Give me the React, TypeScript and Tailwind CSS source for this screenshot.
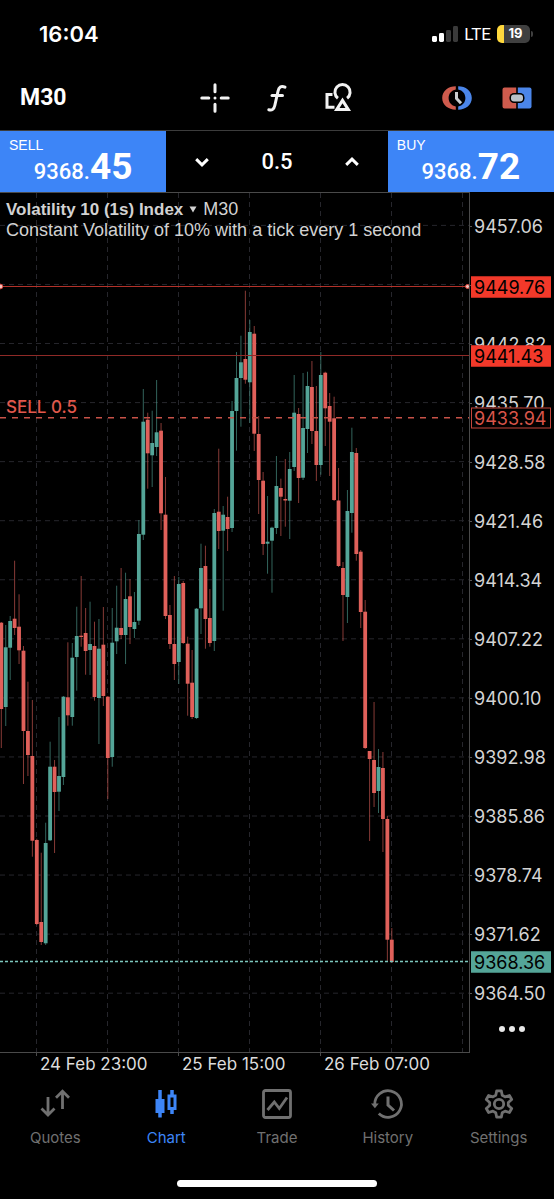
import { useState } from 'react';
import type { ReactNode } from 'react';

// [open side up?, body top, body bottom, wick top, wick bottom]
type Candle = ['g' | 'r', number, number, number, number];

const CHART_TOP = 193;
const CHART_W = 469;
const CHART_H = 859;
const STEP_X = 4.4375;
const FIRST_X = 1.3;

const CANDLES: Candle[] = [
  ['r', 622.7, 709, 622, 748],
  ['g', 647.3, 707, 625, 726],
  ['g', 621, 647.7, 616, 680],
  ['r', 618.7, 628, 560.7, 635],
  ['r', 626.7, 650.3, 594.3, 664],
  ['r', 650.7, 731, 646, 784],
  ['r', 731, 755, 681.7, 776],
  ['r', 756, 840.7, 700, 856.7],
  ['r', 840, 924, 838.7, 925],
  ['r', 922, 942, 852.7, 945],
  ['g', 843, 943.3, 822.7, 945],
  ['g', 766.7, 840.3, 741.7, 841],
  ['r', 766.7, 792, 760, 853],
  ['g', 776, 791.7, 717, 811],
  ['g', 696.7, 777, 696, 785],
  ['r', 697.3, 715.3, 642.3, 725.7],
  ['g', 657.7, 717, 643, 725.7],
  ['g', 636, 657, 606.7, 690.7],
  ['r', 635.7, 637, 576, 646.7],
  ['r', 633, 651, 608, 674.7],
  ['g', 644, 650, 601.7, 675],
  ['r', 646, 697, 621.7, 700.7],
  ['g', 648.7, 698, 619, 744],
  ['r', 644.7, 696, 607, 706],
  ['r', 696.7, 758, 696, 799],
  ['g', 642.7, 757, 608, 766.7],
  ['g', 627.7, 641.3, 585.7, 654],
  ['r', 628, 635, 568, 639],
  ['g', 599, 635, 572.7, 664],
  ['r', 596.3, 627, 579, 644],
  ['g', 622, 629, 592, 638],
  ['g', 534, 620.7, 520, 625],
  ['g', 421.7, 534.7, 389, 540],
  ['r', 419.7, 453.3, 412.7, 488.7],
  ['g', 443, 455.3, 410.7, 487],
  ['g', 432.3, 447, 380, 456],
  ['r', 430.7, 513.3, 423, 530],
  ['r', 514.7, 616, 477, 619],
  ['r', 615, 644, 605, 649],
  ['r', 644, 664, 576, 680],
  ['g', 584, 662, 577, 684],
  ['r', 583, 643, 581, 644],
  ['r', 643.7, 683.7, 636.7, 715.7],
  ['r', 682.7, 717, 650, 719],
  ['g', 608.7, 718, 608, 719],
  ['g', 568, 608.3, 543.7, 634],
  ['r', 566, 619, 545.7, 648.7],
  ['r', 618, 643, 589, 646.7],
  ['g', 513, 641, 509, 651],
  ['r', 511.7, 531, 448.7, 549],
  ['g', 514.7, 530.7, 506, 610.7],
  ['r', 517, 529, 496.7, 551],
  ['g', 411, 528, 401, 532],
  ['g', 378, 411, 352, 450.7],
  ['g', 362.3, 378, 335.7, 426.7],
  ['r', 359, 379.7, 290.7, 383.7],
  ['g', 332, 382.3, 320, 423],
  ['r', 333.7, 433.7, 326, 451],
  ['r', 434, 480, 416, 514],
  ['r', 480.7, 544, 472, 555],
  ['g', 541.7, 543.7, 496, 573.7],
  ['g', 527.7, 540.7, 526.7, 592.7],
  ['g', 486, 528, 456, 534],
  ['r', 488, 496.7, 478.7, 536],
  ['r', 499, 500.5, 459, 526.7],
  ['g', 469, 500.7, 452, 539],
  ['g', 412.7, 467, 375, 471],
  ['r', 414, 478, 408, 503],
  ['g', 428, 477.7, 373, 480],
  ['g', 386, 429, 371.7, 453],
  ['r', 387, 431, 361, 444],
  ['r', 431, 465, 386, 481],
  ['g', 375, 465, 352, 474.7],
  ['r', 372.7, 408.3, 371.7, 446],
  ['r', 406, 421.7, 393, 476],
  ['r', 418.3, 500, 396.7, 501],
  ['r', 500.5, 566, 468, 567],
  ['r', 568, 595, 562, 641],
  ['g', 511, 597, 490, 623],
  ['g', 452, 513, 427.7, 532.7],
  ['r', 453, 554, 448, 560.7],
  ['r', 551.7, 612, 550, 628],
  ['r', 611.7, 748, 600, 749],
  ['r', 751, 759, 751, 841],
  ['r', 760, 793, 702, 807],
  ['g', 767, 791, 749, 813],
  ['r', 768, 819, 752, 852],
  ['r', 819, 939.7, 816, 961],
  ['r', 939.7, 962, 928, 963],
];

const GRID_X = [36.5, 107.5, 178.5, 249.5, 320.5, 391.5, 462.5];
const GRID_Y = Array.from({ length: 14 }, (_, i) => 225.4 + i * 59.06 - CHART_TOP);

const PRICE_LABELS = [
  '9457.06', '', '9442.82', '9435.70', '9428.58', '9421.46', '9414.34',
  '9407.22', '9400.10', '9392.98', '9385.86', '9378.74', '9371.62', '9364.50',
];

const TIME_LABELS = ['24 Feb 23:00', '25 Feb 15:00', '26 Feb 07:00'];

const priceToY = (price: number) => 225.4 - CHART_TOP + ((9457.06 - price) / 7.12) * 59.06;

const PRICE_TAGS = [
  { price: '9449.76', style: 'bg-[#f2392a] border-[#f2392a] text-black' },
  { price: '9441.43', style: 'bg-[#f2392a] border-[#f2392a] text-black' },
  { price: '9433.94', style: 'bg-black border-[#c4463c] text-[#d9554a]' },
  { price: '9368.36', style: 'bg-[#54a598] border-[#54a598] text-black' },
];

function StatusBar() {
  return (
    <div className="flex h-[66px] items-center justify-between pt-[2px] pr-[21px] pl-[39px]">
      <span className="text-[22px] leading-6 font-semibold">16:04</span>
      <div className="flex items-center gap-[6px]">
        <svg width="26" height="16" viewBox="0 0 26 16">
          <rect x="0" y="10" width="5" height="6" rx="1.4" fill="#fff" />
          <rect x="7" y="7" width="5" height="9" rx="1.4" fill="#fff" />
          <rect x="14" y="4" width="5" height="12" rx="1.4" fill="#3a3a3a" />
          <rect x="21" y="0" width="5" height="16" rx="1.4" fill="#3a3a3a" />
        </svg>
        <span className="font-[Roboto] text-[17px] leading-5">LTE</span>
        <div className="flex items-center gap-px">
          <div className="flex h-[18px] w-[33px] items-center justify-center rounded-[5px] bg-[linear-gradient(to_right,#ffd83d_7px,#404040_7px)] pl-1 text-[13px] font-bold">
            19
          </div>
          <div className="h-[6px] w-[2px] rounded-r bg-[#404040]" />
        </div>
      </div>
    </div>
  );
}

function IconButton({ label, onClick, children }: { label: string; onClick?: () => void; children: ReactNode }) {
  return (
    <button aria-label={label} onClick={onClick} className="flex size-8 items-center justify-center">
      {children}
    </button>
  );
}

function Toolbar() {
  return (
    <div className="grid h-16 grid-cols-[1fr_156px_1fr] items-center">
      <button className="justify-self-start pl-5 font-[Roboto] text-[23px] leading-8 font-bold">
        M30
      </button>
      <div className="flex items-center justify-between">
        <IconButton label="Crosshair">
          <svg width="32" height="32" viewBox="0 0 32 32" fill="none" stroke="#f2f2f2" strokeWidth="3" strokeLinecap="round">
            <path d="M16 2.8v7M16 22.2v7M2.8 16h7M22.2 16h7" />
            <circle cx="16" cy="16" r="1.5" fill="#f2f2f2" stroke="none" />
          </svg>
        </IconButton>
        <IconButton label="Indicators">
          <svg width="32" height="32" viewBox="0 0 32 32" fill="none" stroke="#f2f2f2" strokeWidth="3" strokeLinecap="round">
            <path d="M24 5.2c-4-1.8-6.2.2-7 4L13.8 23.5c-.8 3.700-2.800 5.200-6 4.200" />
            <path d="M11 13.500h10.500" />
          </svg>
        </IconButton>
        <IconButton label="Objects">
          <svg width="32" height="32" viewBox="0 0 32 32" fill="none" stroke="#f2f2f2" strokeWidth="3">
            <path d="M14.900 16.200a7.600 7.600 0 1 1 9.200 0" />
            <path d="M9.500 12.500H4v12.700h7.500" />
            <path d="M19.500 18.400 13.700 27.600h11.600z" />
          </svg>
        </IconButton>
      </div>
      <div className="flex items-center gap-7 justify-self-end pr-[21px]">
        <IconButton label="One-click trading">
          <svg width="32" height="32" viewBox="0 0 32 32" fill="none">
            <path d="M14.800 4.300C7.300 4.300 1.200 9 1.200 16s6.100 11.700 13.600 11.700v-3.200C10.500 23.500 7.600 20.500 7.600 16s2.900-7.500 7.200-8.500z" fill="#cf5b4d" />
            <path d="M17.200 4.300C24.700 4.300 30.800 9 30.800 16s-6.100 11.700-13.600 11.700v-3.200c4.300-1 7.200-4 7.200-8.500s-2.900-7.500-7.200-8.500z" fill="#4b86ea" />
            <path d="M15.500 10v6.500l4.500 4.800" stroke="#c9cdd0" strokeWidth="3" />
          </svg>
        </IconButton>
        <IconButton label="Trade panel">
          <svg width="32" height="32" viewBox="0 0 32 32">
            <path d="M3.500 5.500h11.700v21H3.500a2 2 0 0 1-2-2v-17a2 2 0 0 1 2-2z" fill="#cf5b4d" />
            <path d="M16.800 5.500h11.700a2 2 0 0 1 2 2v17a2 2 0 0 1-2 2H16.800z" fill="#4b86ea" />
            <rect x="8.500" y="11" width="15" height="10" rx="4.500" fill="#000" />
            <rect x="10" y="12.500" width="12" height="7" rx="3" fill="#b9c1c8" />
          </svg>
        </IconButton>
      </div>
    </div>
  );
}

function QuoteButton({ side, whole, pips }: { side: string; whole: string; pips: string }) {
  return (
    <button className="flex flex-col items-stretch bg-[#3d85f7] px-[9px] pt-[6px] text-left">
      <span className="font-['Liberation_Sans',sans-serif] text-sm leading-4">{side}</span>
      <span className="-mt-1 text-center font-[Roboto] leading-9">
        <span className="text-[22px] leading-9 font-medium">{whole}</span>
        <span className="text-[37px] leading-9 font-bold">{pips}</span>
      </span>
    </button>
  );
}

function QuotePanel() {
  const [volume, setVolume] = useState(0.5);

  const step = (delta: number) =>
    setVolume((v) => Math.max(0.5, Math.round((v + delta) * 10) / 10));

  return (
    <div className="grid h-[62px] grid-cols-[3fr_4fr_3fr] border-t border-[#3c3c3c]">
      <QuoteButton side="SELL" whole="9368." pips="45" />
      <div className="flex items-center justify-between px-5">
        <IconButton label="Decrease volume" onClick={() => step(-0.1)}>
          <svg width="16" height="16" viewBox="0 0 16 16" fill="none" stroke="#fff" strokeWidth="3">
            <path d="m2.200 5.200 5.800 5.600 5.800-5.600" />
          </svg>
        </IconButton>
        <input
          aria-label="Volume"
          value={volume}
          onChange={(e) => setVolume(Number(e.target.value) || 0)}
          className="w-20 bg-transparent text-center font-[Roboto] text-[22px] font-medium outline-none"
        />
        <IconButton label="Increase volume" onClick={() => step(0.1)}>
          <svg width="16" height="16" viewBox="0 0 16 16" fill="none" stroke="#fff" strokeWidth="3">
            <path d="m2.200 10.800 5.800-5.600 5.800 5.600" />
          </svg>
        </IconButton>
      </div>
      <QuoteButton side="BUY" whole="9368." pips="72" />
    </div>
  );
}

function CandleChart() {
  return (
    <svg
      className="block h-[859px] w-full"
      viewBox={`0 0 ${CHART_W} ${CHART_H}`}
      preserveAspectRatio="none"
    >
      <g stroke="#26262c" strokeWidth="1" strokeDasharray="5 4">
        {GRID_X.map((x) => (
          <line key={x} x1={x} x2={x} y1="0" y2={CHART_H} />
        ))}
        {GRID_Y.map((y) => (
          <line key={y} x1="0" x2={CHART_W} y1={y} y2={y} />
        ))}
      </g>

      {CANDLES.map(([dir, top, bottom, high, low], i) => {
        const x = FIRST_X + i * STEP_X;
        return (
          <g key={i} fill={dir === 'g' ? '#54a598' : '#e0605a'}>
            <rect x={x - 0.5} y={high - CHART_TOP} width="1" height={low - high} opacity="0.6" />
            <rect x={x - 1.9} y={top - CHART_TOP} width="3.8" height={bottom - top} />
          </g>
        );
      })}

      {/* Stop loss, take profit, open position and bid lines */}
      <line x1="0" x2={CHART_W} y1="93.500" y2="93.500" stroke="#b3322a" />
      <line x1="0" x2={CHART_W} y1="162.500" y2="162.500" stroke="#8f2a27" />
      <line x1="0" x2={CHART_W} y1="224.800" y2="224.800" stroke="#c85248" strokeWidth="1.400" strokeDasharray="6 6" />
      <line x1="0" x2={CHART_W} y1="768.500" y2="768.500" stroke="#7cc7bd" strokeWidth="1.300" strokeDasharray="3 2" />
      <circle cx="0.500" cy="93.500" r="2.300" fill="#f6c4bf" stroke="#d8443a" />
      <circle cx="467.500" cy="93.500" r="2" fill="#f6c4bf" stroke="#d8443a" />
    </svg>
  );
}

function PriceAxis() {
  return (
    <div className="relative w-[84px] shrink-0 pt-[5px] text-[18px]">
      {PRICE_LABELS.map((label, i) => (
        <div key={i} className="flex h-[59px] items-center text-[#d4d4d4]">
          <span className="mr-[2px] h-px w-[2px] bg-[#555]" />
          {label}
        </div>
      ))}
      {PRICE_TAGS.map(({ price, style }) => (
        <div
          key={price}
          className={`absolute left-px flex h-[21px] w-20 -translate-y-1/2 items-center border pl-[2px] ${style}`}
          style={{ top: Math.round(priceToY(Number(price))) + 2 }}
        >
          {price}
        </div>
      ))}
      <button aria-label="More" className="absolute right-[29px] bottom-[17px] flex gap-1 py-1">
        <span className="size-[6px] rounded-full bg-[#e8e8e8]" />
        <span className="size-[6px] rounded-full bg-[#e8e8e8]" />
        <span className="size-[6px] rounded-full bg-[#e8e8e8]" />
      </button>
    </div>
  );
}

function ChartPanel() {
  return (
    <div>
      <div className="flex">
        <div className="relative min-w-0 flex-1 border-t border-r border-b border-[#4a4a4a]">
          <CandleChart />
          <div className="absolute top-[6px] left-[6px] font-['Liberation_Sans',sans-serif] text-[18px] leading-[21px] whitespace-nowrap text-[#d2d2d2]">
            <div className="flex items-center gap-[6px]">
              <span className="text-[17px] font-bold">Volatility 10 (1s) Index</span>
              <svg width="8" height="7" viewBox="0 0 8 7">
                <path d="M.5.500h7L4 6.500z" fill="#d2d2d2" />
              </svg>
              <span>M30</span>
            </div>
            <div>Constant Volatility of 10% with a tick every 1 second</div>
          </div>
          <div className="absolute top-[204px] left-[6px] text-[17px] leading-5 font-medium text-[#e2584c]">
            SELL 0.5
          </div>
        </div>
        <PriceAxis />
      </div>
      <div className="flex h-[26px] pr-[92px] pl-9">
        {TIME_LABELS.map((label) => (
          <div key={label} className="flex flex-1 text-[17px] leading-[22px] whitespace-nowrap text-[#dcdcdc]">
            <span className="mr-[3px] h-[3px] w-px bg-[#4a4a4a]" />
            {label}
          </div>
        ))}
      </div>
    </div>
  );
}

const TABS = [
  {
    name: 'Quotes',
    icon: (
      <path d="M9 9v18M2.500 20.500 9 27l6.500-6.500M23.500 21V3.200M17 9.700l6.500-6.500 6.500 6.500" />
    ),
  },
  {
    name: 'Chart',
    icon: (
      <>
        <rect x="5.500" y="11" width="9" height="14" fill="currentColor" stroke="none" />
        <path d="M10 2v27.500M22 2v6M22 21v5" strokeWidth="3.500" />
        <rect x="19" y="8" width="6" height="12.500" strokeWidth="3" />
      </>
    ),
  },
  {
    name: 'Trade',
    icon: (
      <>
        <rect x="2.500" y="2.500" width="27" height="27" rx="2" />
        <path d="m6.500 22 6.800-8 5 6.500L26 9.500" />
      </>
    ),
  },
  {
    name: 'History',
    icon: (
      <>
        <path d="M2.800 16.500a13.300 13.300 0 1 1 4 9" />
        <path d="M-1 15.500h7.800l-3.900 4.700z" fill="currentColor" stroke="none" />
        <path d="M16 8.500V17l6 5.500" strokeWidth="3" />
      </>
    ),
  },
  {
    name: 'Settings',
    icon: (
      <>
        <path
          strokeLinejoin="round"
          d="M13.700 2.800h4.600l.9 4.400 2.900 1.700 4.300-1.400 2.300 4-3.400 3v3l3.400 3-2.300 4-4.300-1.400-2.900 1.700-.9 4.400h-4.600l-.9-4.400-2.900-1.700-4.300 1.400-2.300-4 3.400-3v-3l-3.400-3 2.300-4 4.300 1.400 2.900-1.700z"
        />
        <circle cx="16" cy="16" r="4.700" />
      </>
    ),
  },
];

function TabBar() {
  const [active, setActive] = useState('Chart');

  return (
    <nav className="grid grid-cols-5">
      {TABS.map(({ name, icon }) => (
        <button
          key={name}
          onClick={() => setActive(name)}
          className={`flex flex-col items-center gap-2 pt-[9px] ${name === active ? 'text-[#3d85f7]' : 'text-[#707070]'}`}
        >
          <svg width="32" height="32" viewBox="0 0 32 32" fill="none" stroke="currentColor" strokeWidth="2.800" className="overflow-visible">
            {icon}
          </svg>
          <span className="text-[15px] leading-5">{name}</span>
        </button>
      ))}
    </nav>
  );
}

export default function App() {
  return (
    <div className="min-h-screen bg-black font-[Inter,sans-serif] text-white">
      <StatusBar />
      <Toolbar />
      <QuotePanel />
      <ChartPanel />
      <TabBar />
      <div className="flex justify-center pt-8 pb-3">
        <div className="h-[7px] w-[36%] rounded-full bg-white" />
      </div>
    </div>
  );
}
